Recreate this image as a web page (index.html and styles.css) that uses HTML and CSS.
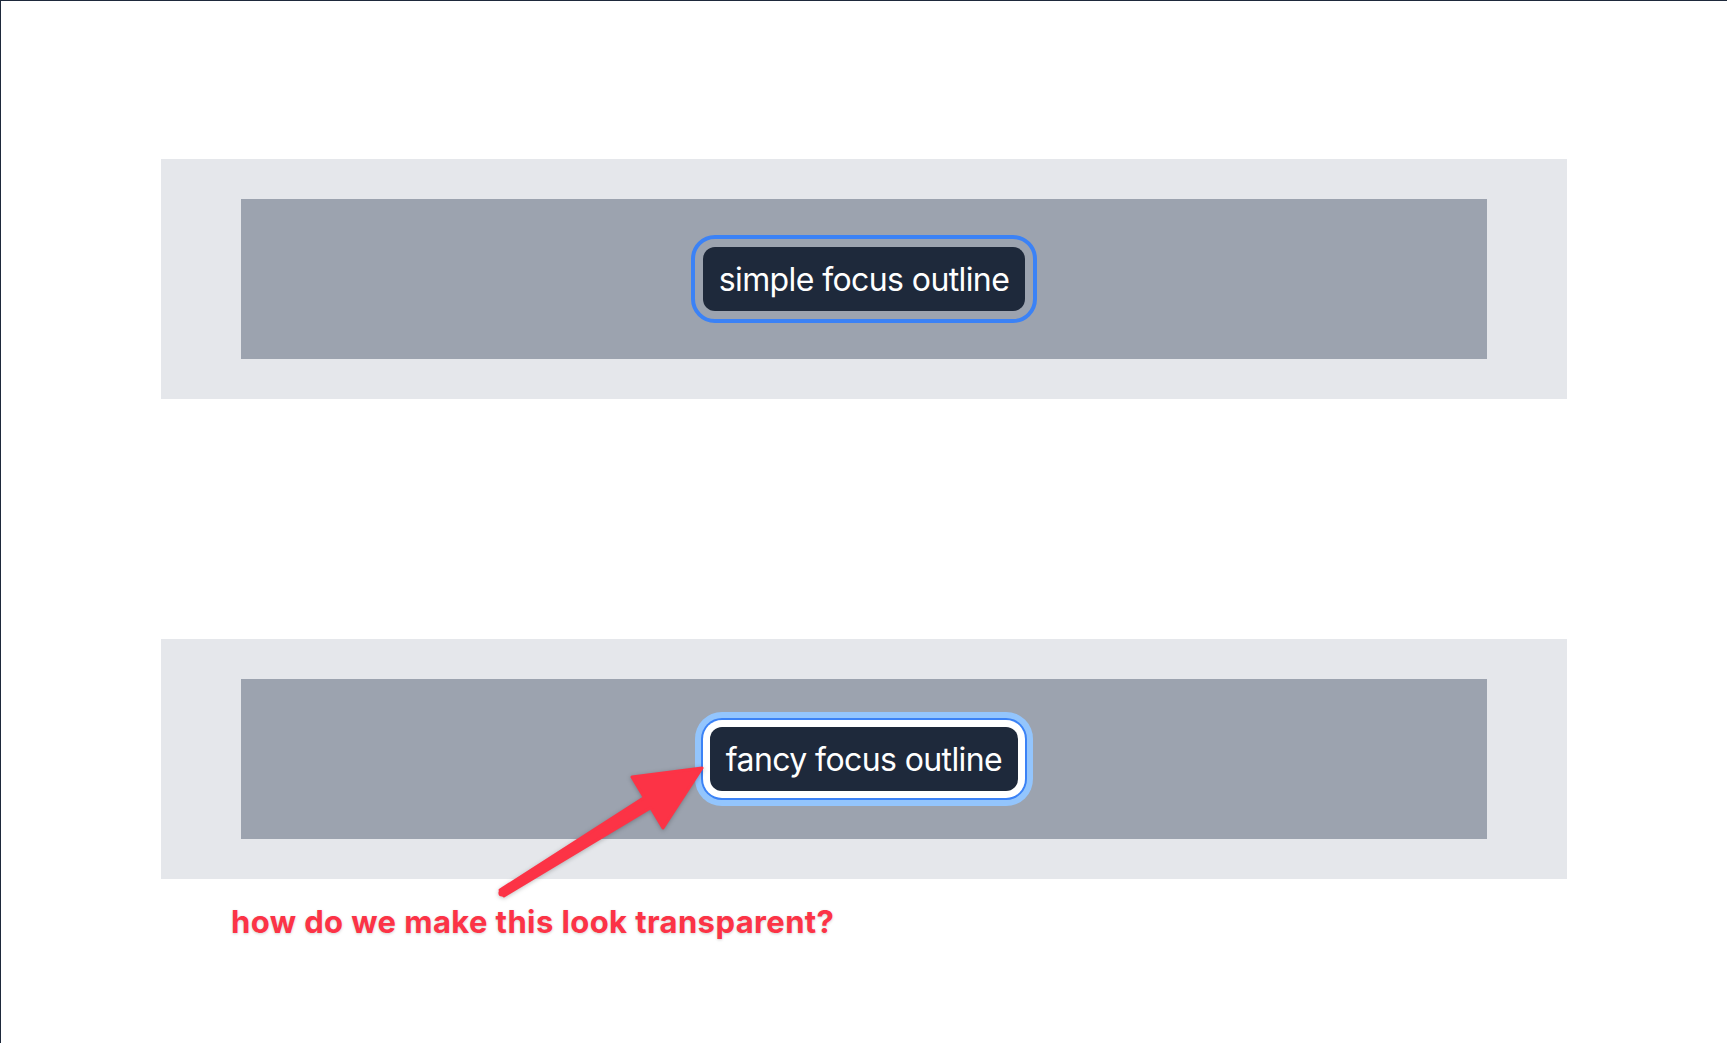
FILE: index.html
```html
<!DOCTYPE html>
<html lang="en">
<head>
<meta charset="utf-8">
<title>Focus outlines</title>
<link rel="stylesheet" href="styles.css">
</head>
<body>
<div class="page">
  <section class="frame">
    <div class="stage">
      <button class="btn btn-simple" type="button">simple focus outline</button>
    </div>
  </section>
  <section class="frame frame-second">
    <div class="stage">
      <button class="btn btn-fancy" type="button">fancy focus outline</button>
    </div>
  </section>
  <svg class="arrow" width="1727" height="1043" viewBox="0 0 1727 1043" aria-hidden="true">
    <polygon points="702,768 632,777 644.3,797.4 500.1,890 503.9,896 650.7,807.6 663,828" fill="#fc3346" stroke="#fc3346" stroke-width="3" stroke-linejoin="round"/>
    <circle cx="502" cy="893" r="3.6" fill="#fc3346"/>
  </svg>
  <p class="note">how do we make this look transparent?</p>
</div>
</body>
</html>
```
FILE: styles.css
```css
* { box-sizing: border-box; }
html, body { margin: 0; padding: 0; background: #ffffff; }
body { font-family: Inter, "Noto Sans", "Liberation Sans", sans-serif; }
.page {
  position: relative;
  min-height: 1043px;
  border-top: 1px solid #1e293b;
  border-left: 1px solid #1e293b;
  padding-top: 158px;
  display: flex;
  flex-direction: column;
  align-items: center;
}
.frame {
  width: 1406px;
  padding: 40px 80px;
  background: #e5e7eb;
}
.frame-second { margin-top: 240px; }
.stage {
  height: 160px;
  background: #9ca3af;
  display: flex;
  align-items: center;
  justify-content: center;
}
.btn {
  font-family: Inter, "Noto Sans", "Liberation Sans", sans-serif;
  font-size: 32px;
  line-height: 48px;
  letter-spacing: -0.6px;
  font-weight: 400;
  color: #ffffff;
  background: #1e293b;
  border: 0;
  border-radius: 12px;
  padding: 9px 16px 7px;
  margin: 0;
}
.btn-simple {
  outline: 4px solid #3b82f6;
  outline-offset: 8px;
}
.btn-fancy {
  box-shadow: 0 0 0 7px #ffffff, 0 0 0 9px #3b82f6, 0 0 0 15px #93c5fd;
}
.arrow {
  position: absolute;
  left: -1px;
  top: -1px;
  filter: drop-shadow(0 1px 2px rgba(0, 0, 0, 0.25));
}
.note {
  position: absolute;
  left: 230px;
  top: 903px;
  margin: 0;
  font-family: Inter, "Noto Sans", "Liberation Sans", sans-serif;
  font-size: 31px;
  line-height: 36px;
  letter-spacing: 0.4px;
  font-weight: 700;
  color: #fc3346;
  text-shadow: 0 1px 3px rgba(0, 0, 0, 0.18);
}
```
